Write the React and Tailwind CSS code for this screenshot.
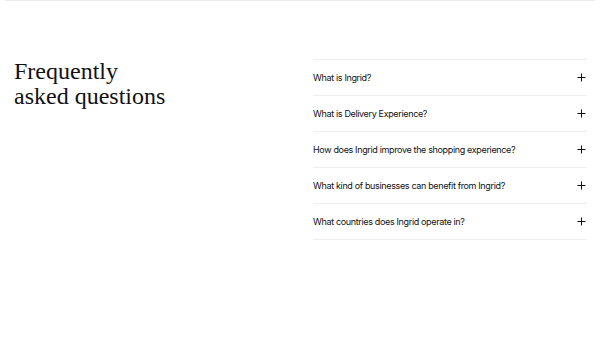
import React from "react";

const questions = [
  "What is Ingrid?",
  "What is Delivery Experience?",
  "How does Ingrid improve the shopping experience?",
  "What kind of businesses can benefit from Ingrid?",
  "What countries does Ingrid operate in?",
];

const Plus = () => (
  <svg width="9" height="9" viewBox="0 0 9 9" className="text-[#111]">
    <path d="M4.5 0.5v8M0.5 4.5h8" stroke="currentColor" strokeWidth="1" />
  </svg>
);

export default function App() {
  return (
    <div className="w-[600px] h-[349px] bg-white overflow-hidden">
      <div className="mx-[5px] border-t border-[#ececec]" />
      <section className="flex pt-[58px] pl-[14px] pr-[13px]">
        <h2 className="w-[299px] font-['Liberation_Serif',serif] text-[24px] leading-[25px] text-[#111]">
          Frequently
          <br />
          asked questions
        </h2>
        <ul className="flex-1 border-t border-[#efefef]">
          {questions.map((q) => (
            <li
              key={q}
              className="flex items-center justify-between h-[36px] border-b border-[#efefef] font-['Inter',sans-serif] text-[9px] tracking-[-0.35px] text-[#111]"
            >
              <span>{q}</span>
              <span className="pr-[1px]">
                <Plus />
              </span>
            </li>
          ))}
        </ul>
      </section>
    </div>
  );
}
